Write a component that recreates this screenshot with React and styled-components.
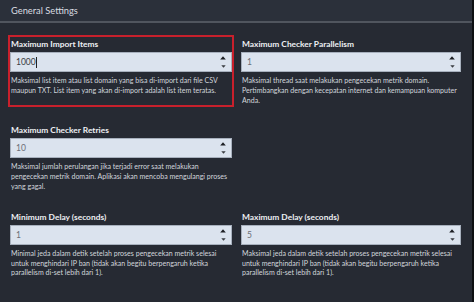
import React from 'react';
import styled, { createGlobalStyle } from 'styled-components';

const GlobalStyle = createGlobalStyle`
  html, body {
    margin: 0;
    padding: 0;
    background: #262a33;
  }
  body {
    font-family: Lato, "Open Sans", sans-serif;
    overflow: hidden;
  }
`;

const Page = styled.div`
  width: 474px;
  height: 302px;
  display: flex;
  background: #262a33;
  color: #e4e6ea;
`;

const Main = styled.div`
  flex: 1;
  display: flex;
  flex-direction: column;
`;

const ScrollEdge = styled.div`
  width: 2px;
  background: #0d0f12;
`;

const Header = styled.div`
  height: 21px;
  padding-left: 11px;
  display: flex;
  align-items: center;
  background: #2b303a;
  border-bottom: 2px solid #50555e;
  font-size: 9.3px;
  color: #d9dce1;
`;

const Grid = styled.div`
  display: grid;
  grid-template-columns: 226px 226px;
  column-gap: 5px;
  row-gap: 14px;
  padding: 12px 0 0 8px;
  align-items: stretch;
`;

const Field = styled.div`
  border: 2px solid ${p => (p.$highlight ? '#c8202c' : 'transparent')};
  padding: 1px 0 0 0;
  display: flex;
  flex-direction: column;
`;

const Label = styled.div`
  font-size: 8.4px;
  font-weight: 700;
  line-height: 12px;
  margin: 0 0 2px 1px;
  color: #eef0f3;
`;

const InputBox = styled.div`
  height: 20px;
  box-sizing: border-box;
  display: flex;
  align-items: center;
  background: #dbe3ee;
  border: 1px solid #a7b0bd;
  margin-right: ${p => (p.$narrow ? '2px' : '0')};
`;

const Value = styled.div`
  flex: 1;
  padding-left: 5px;
  font-size: 8.5px;
  color: ${p => (p.$focused ? '#3a3d42' : '#6b6f76')};
  display: flex;
  align-items: center;
`;

const Caret = styled.span`
  display: inline-block;
  width: 1px;
  height: 11px;
  background: #222;
`;

const Spinner = styled.div`
  width: 10px;
  height: 100%;
  display: flex;
  flex-direction: column;
  justify-content: space-between;
  align-items: center;
  padding: 3px 0;
  box-sizing: border-box;
  margin-right: 3px;
`;

const Help = styled.div`
  margin: 4px 0 0 1px;
  font-size: 7.05px;
  line-height: 9.8px;
  color: #d2d6dc;
`;

const Arrows = () => (
  <Spinner>
    <svg width="6" height="4" viewBox="0 0 6 4">
      <path d="M3 0.3 L5.8 3.6 L0.2 3.6 Z" fill="#1c1e22" />
    </svg>
    <svg width="5" height="3" viewBox="0 0 5 3">
      <path d="M0.3 0.3 L4.7 0.3 L2.5 2.8 Z" fill="#3a3d42" />
    </svg>
  </Spinner>
);

const fields = [
  {
    label: 'Maximum Import Items',
    value: '1000',
    focused: true,
    help: 'Maksimal list item atau list domain yang bisa di-import dari file CSV maupun TXT. List item yang akan di-import adalah list item teratas.',
  },
  {
    label: 'Maximum Checker Parallelism',
    value: '1',
    narrow: true,
    help: 'Maksimal thread saat melakukan pengecekan metrik domain. Pertimbangkan dengan kecepatan internet dan kemampuan komputer Anda.',
  },
  {
    label: 'Maximum Checker Retries',
    value: '10',
    help: 'Maksimal jumlah perulangan jika terjadi error saat melakukan pengecekan metrik domain. Aplikasi akan mencoba mengulangi proses yang gagal.',
  },
  null,
  {
    label: 'Minimum Delay (seconds)',
    value: '1',
    help: 'Minimal jeda dalam detik setelah proses pengecekan metrik selesai untuk menghindari IP ban (tidak akan begitu berpengaruh ketika parallelism di-set lebih dari 1).',
  },
  {
    label: 'Maximum Delay (seconds)',
    value: '5',
    narrow: true,
    help: 'Maksimal jeda dalam detik setelah proses pengecekan metrik selesai untuk menghindari IP ban (tidak akan begitu berpengaruh ketika parallelism di-set lebih dari 1).',
  },
];

export default function App() {
  return (
    <Page>
      <GlobalStyle />
      <Main>
        <Header>General Settings</Header>
        <Grid>
          {fields.map((f, i) =>
            f ? (
              <Field key={i} $highlight={f.focused}>
                <Label>{f.label}</Label>
                <InputBox $narrow={f.narrow}>
                  <Value $focused={f.focused}>
                    {f.value}
                    {f.focused && <Caret />}
                  </Value>
                  <Arrows />
                </InputBox>
                <Help>{f.help}</Help>
              </Field>
            ) : (
              <div key={i} />
            )
          )}
        </Grid>
      </Main>
      <ScrollEdge />
    </Page>
  );
}
